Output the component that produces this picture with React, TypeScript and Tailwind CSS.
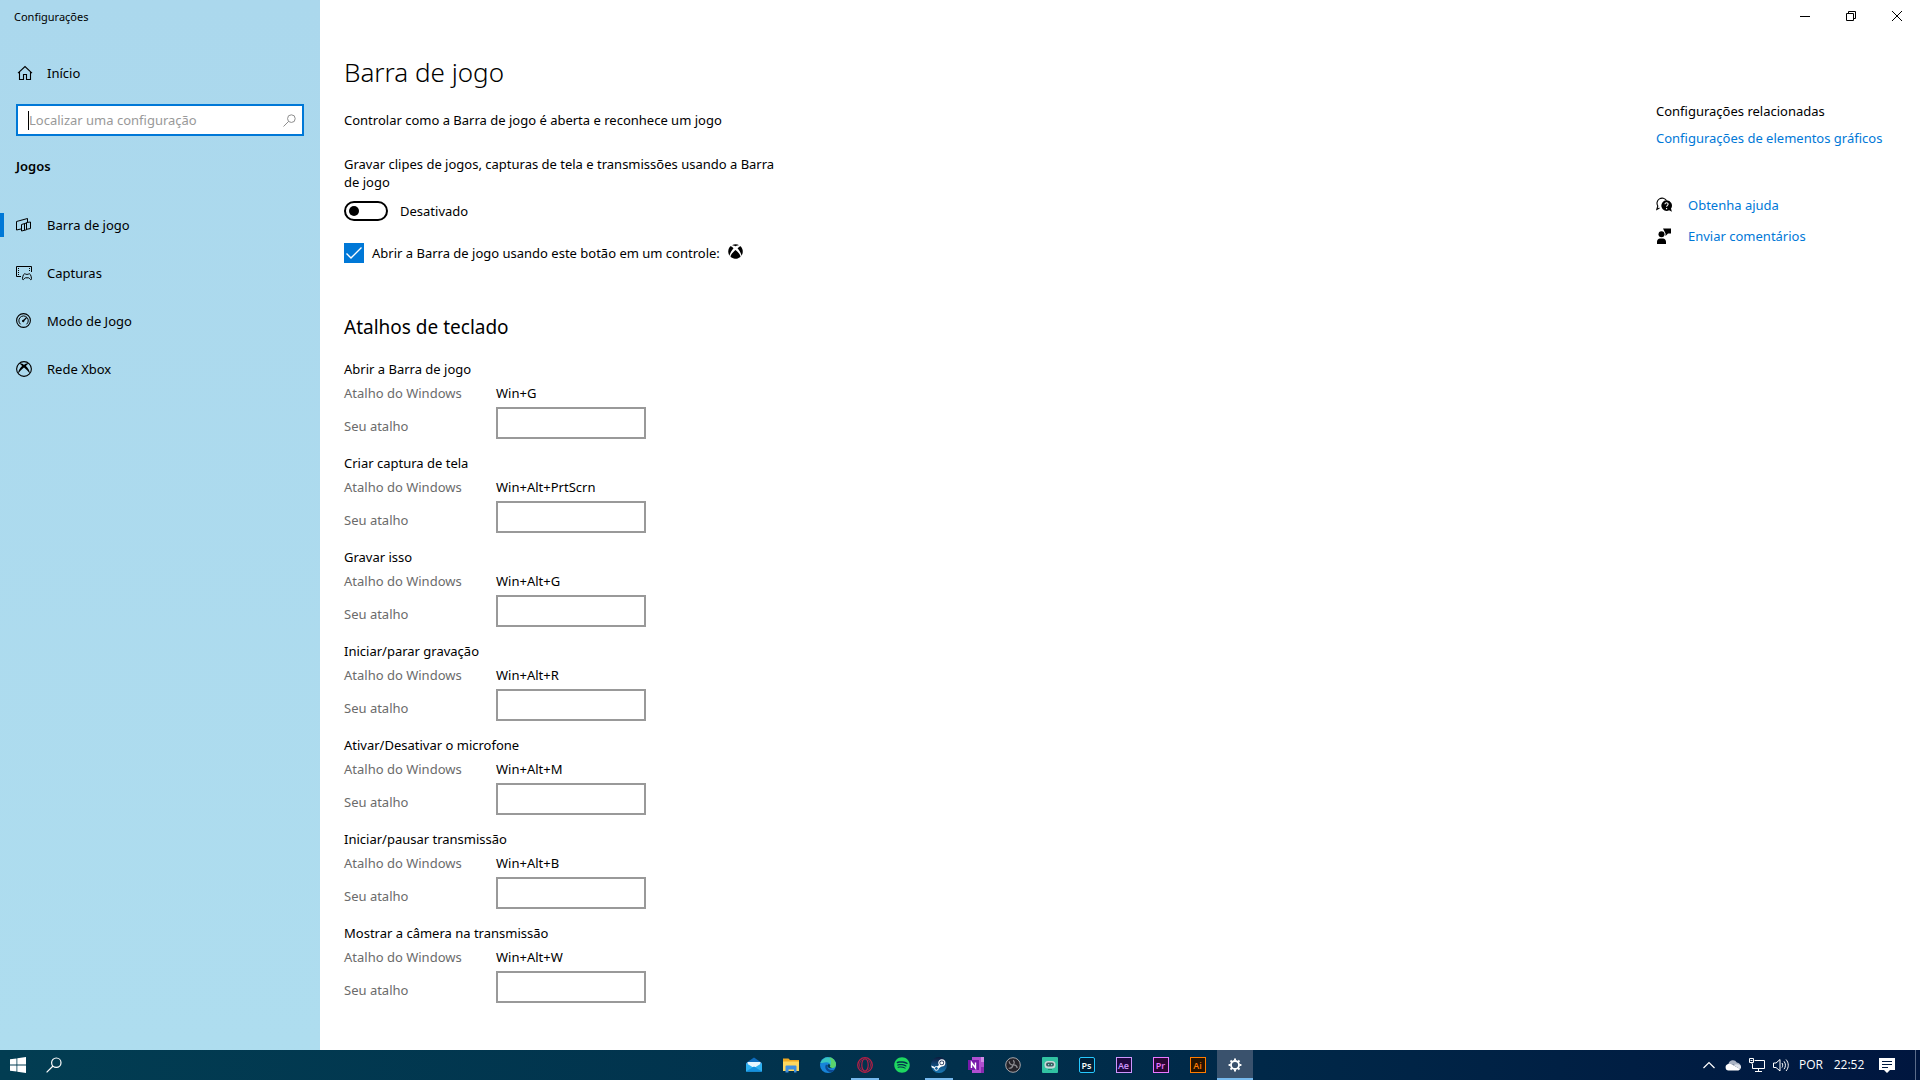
import React, { useState } from "react";
import { FaSpotify, FaXbox } from "react-icons/fa";

interface NavItem {
  label: string;
  icon: React.ReactNode;
}

interface Shortcut {
  id: string;
  title: string;
  keys: string;
}

interface TaskApp {
  name: string;
  icon: React.ReactNode;
  running?: boolean;
  active?: boolean;
}

const HomeIcon = () => (
  <svg width="16" height="16" viewBox="0 0 16 16" fill="none" stroke="black" strokeWidth="1.1">
    <path d="M1 8.2 8 1.5l7 6.7M2.5 7v7.5h4V9.500h3v5h4V7" />
  </svg>
);

const SearchIcon = ({ size, color }: { size: number; color: string }) => (
  <svg width={size} height={size} viewBox="0 0 16 16" fill="none" stroke={color} strokeWidth="1.2">
    <circle cx="10.300" cy="5.700" r="4.700" />
    <path d="M7 9 .6 15.400" />
  </svg>
);

const GameBarIcon = () => (
  <svg width="16" height="16" viewBox="0 0 16 16" fill="none" stroke="black">
    <path d="M5 12 .5 13V4.500L11.500 1.500V5" />
    <path d="M5.500 7.500v6.500l5-1.200V5.500l4-.5v6.500l-4 .8M5.500 7.500l5-1.500M8.500 7v6" />
  </svg>
);

const CapturesIcon = () => (
  <svg width="16" height="16" viewBox="0 0 16 16" fill="none" stroke="black">
    <path d="M5 11.500H.5v-10h15V7" />
    <path d="M2.500 3v8M13.500 3v4" strokeDasharray="1 1" />
    <path d="M6.700 14.500c-.6-1 .5-5.500 1.800-5.700.9-.1 1 .6 2.500.6s1.700-.7 2.500-.6c1.300.2 2.400 4.700 1.800 5.700-.8 1-1.900-1.700-2.700-1.700H9.400c-.8 0-1.900 2.700-2.700 1.700z" />
  </svg>
);

const GameModeIcon = () => (
  <svg width="16" height="16" viewBox="0 0 16 16" fill="none" stroke="black">
    <circle cx="7.500" cy="7.500" r="6.900" strokeWidth="1.1" />
    <path d="M4.600 11.300a4.700 4.700 0 1 1 5.900 0" />
    <path d="M7.200 8 10.600 4.500" strokeWidth="1.2" />
    <circle cx="7.200" cy="8" r=".8" fill="black" />
  </svg>
);

const XboxNetworkIcon = () => (
  <svg width="16" height="16" viewBox="0 0 16 16">
    <circle cx="8" cy="8" r="7.400" fill="none" stroke="black" strokeWidth="1.1" />
    <path d="M3.200 2.500C5 1.900 6.900 3 8 4c1.100-1 3-2.100 4.800-1.500-.9.300-2.200 1.700-2.900 2.600 2.300 2.100 4.200 5.400 3.900 7.600C12.500 10.500 9.800 7.700 8 6.400 6.200 7.700 3.500 10.500 2.200 12.700c-.3-2.200 1.600-5.500 3.900-7.600-.7-.9-2-2.300-2.900-2.600z" />
  </svg>
);

const HelpIcon = () => (
  <svg width="16" height="16" viewBox="0 0 16 16">
    <path d="M3.500 11 .8 12.500 1.800 9A5 5 0 1 1 10.500 3.500" fill="none" stroke="black" strokeWidth="1.1" />
    <path d="M10.500 3.300a5.300 5.300 0 1 0 2.600 10l2.800 1.500-.9-3.200a5.300 5.300 0 0 0-4.500-8.300z" />
    <path d="M9 7.200c0-2 3.200-1.900 3.100.1-.1 1.100-1.500 1.100-1.500 2.500M10.600 11v1.200" fill="none" stroke="white" strokeWidth="1.1" />
  </svg>
);

const FeedbackIcon = () => (
  <svg width="16" height="16" viewBox="0 0 16 16">
    <circle cx="5.500" cy="6.300" r="3" />
    <path d="M1 16v-2.200c0-2 1.300-3.300 3-3.300h3c1.700 0 3 1.300 3 3.300V16zM7 .5h8v5h-3L9.500 8V5.500z" />
  </svg>
);

const WindowsIcon = () => (
  <svg width="16" height="16" viewBox="0 0 16 16" fill="white">
    <path d="M0 2.300 6.500 1.400v6.200H0zM7.300 1.300 16 0v7.600H7.300zM0 8.400h6.500v6.200L0 13.700zM7.300 8.400H16V16l-8.700-1.300z" />
  </svg>
);

const MailIcon = () => (
  <svg width="16" height="16" viewBox="0 0 16 16">
    <path d="M0 6 8 .5 16 6v8.500H0z" fill="#0f6cbd" />
    <path d="M1.500 5h13v5h-13z" fill="#e8f6ff" />
    <path d="M0 6l8 5 8-5v8.500H0z" fill="#2fb1f0" />
    <path d="M0 14.500 8 9.500l8 5z" fill="#1490df" />
  </svg>
);

const FolderIcon = () => (
  <svg width="16" height="16" viewBox="0 0 16 16">
    <path d="M0 1.500h5.500L7 3h9v11H0z" fill="#f0a922" />
    <path d="M0 4.500h16V14H0z" fill="#ffd75e" />
    <path d="M3.500 8.500h9a1 1 0 0 1 1 1v6H11v-3H5.500v3H2.500v-6a1 1 0 0 1 1-1z" fill="#3f8fe0" />
  </svg>
);

const EdgeIcon = () => (
  <svg width="16" height="16" viewBox="0 0 16 16">
    <circle cx="8" cy="8" r="8" fill="#1784d8" />
    <path d="M.4 6A8 8 0 0 1 16 7.500c0 2.500-2 3.500-4 3.500-1.700 0-2.600-.7-2-1.500.9-1.500 0-4.300-3.600-4.300C3.400 5.200 1 6.500.4 6z" fill="#39c6c0" />
    <path d="M9 .1A8 8 0 0 1 16 7.500c0 2.500-2 3.500-4 3.500-1.700 0-2.600-.7-2-1.500C12 6 11 2 9 .1z" fill="#5bd36b" />
    <path d="M6 7.500c-2 3 .5 7.300 4.500 7.700 1.700 0 3.500-1.200 4.300-2.700-4 1.800-8.300-.7-7.300-4.300z" fill="#0c4a94" />
    <path d="M7.500 8.500c.3-1.600 2.500-1.400 2.700 0 0 .6-.5 1-.2 1.600.3.500 1 .8 2 .9-2 .8-4.700-.4-4.500-2.500z" fill="#023a50" />
  </svg>
);

const OperaIcon = () => (
  <svg width="16" height="16" viewBox="0 0 16 16" fill="none" stroke="#b51f47">
    <circle cx="8" cy="8" r="7.300" strokeWidth="1.3" />
    <ellipse cx="8" cy="8" rx="3.200" ry="6.200" strokeWidth="1.2" />
    <path d="M5.300 2.300C1.500 5 1.500 11 5.300 13.700M10.700 2.300c3.800 2.700 3.800 8.700 0 11.400" strokeWidth=".7" />
  </svg>
);

const SteamIcon = () => (
  <svg width="16" height="16" viewBox="0 0 16 16">
    <defs>
      <linearGradient id="steam" x1="0" y1="0" x2="0" y2="1">
        <stop offset="0" stopColor="#0c1a3c" />
        <stop offset="1" stopColor="#1a7bb8" />
      </linearGradient>
    </defs>
    <circle cx="8" cy="8" r="8" fill="url(#steam)" />
    <path d="M.2 8.500 5 10.500l3-2.500V5.500l3.500 3.300L8 11.300 6.500 13 .8 10.500z" fill="white" />
    <circle cx="10.800" cy="5.800" r="3" fill="#12264d" stroke="white" strokeWidth="1.2" />
    <circle cx="10.800" cy="5.800" r="1.600" fill="white" />
    <circle cx="5.400" cy="11.400" r="1.900" fill="#17619a" stroke="white" />
  </svg>
);

const OneNoteIcon = () => (
  <svg width="16" height="16" viewBox="0 0 16 16">
    <path d="M4 0h12v16H4z" fill="#b14fd0" />
    <path d="M13 0h3v5h-3z" fill="#d08ae6" />
    <path d="M13 10h3v6h-3z" fill="#8a2bb0" />
    <path d="M0 3h11v10H0z" fill="#7719aa" />
    <path d="M3.500 11V5.500l4 5.500V5.500" fill="none" stroke="white" strokeWidth="1.4" />
  </svg>
);

const ObsIcon = () => (
  <svg width="16" height="16" viewBox="0 0 16 16">
    <circle cx="8" cy="8" r="7.300" fill="#25232a" stroke="#a9a9ad" strokeWidth="1" />
    <path d="M4.200 4.200c0 2.300 1.500 3.600 3.800 3.800 1.500-1.500 1.500-3.300.3-4.800M8 8c-.5 2.300-2 3.500-4.300 3.200M8 8c2.200-.4 3.800.8 4.300 3" fill="none" stroke="#8d8d92" strokeWidth="1.2" />
  </svg>
);

const StreamlabsIcon = () => (
  <svg width="16" height="16" viewBox="0 0 16 16">
    <rect width="16" height="16" rx="1" fill="#31c3a2" />
    <rect x="2.500" y="4" width="11" height="7.500" rx="3.500" fill="#c9d6d6" />
    <rect x="4" y="5.500" width="8" height="4" rx="2" fill="#3c5960" />
    <path d="M6 7h1.200v1.200H6zM9 7h1.200v1.200H9z" fill="#7df0d4" />
    <path d="M6 12h4v1H6z" fill="#1a8f78" />
  </svg>
);

const GearIcon = () => (
  <svg width="14" height="14" viewBox="0 0 14 14" fill="none" stroke="white">
    <circle cx="7" cy="7" r="4" strokeWidth="1.800" />
    <path d="M7 .6v2M7 11.400v2M.6 7h2M11.400 7h2M2.500 2.500l1.400 1.400M10.100 10.100l1.400 1.400M11.500 2.500l-1.400 1.400M3.900 10.100l-1.400 1.400" strokeWidth="2" />
  </svg>
);

const adobe = "flex h-4 w-4 items-center justify-center border text-[9px] font-semibold leading-none";

const navItems: NavItem[] = [
  { label: "Barra de jogo", icon: <GameBarIcon /> },
  { label: "Capturas", icon: <CapturesIcon /> },
  { label: "Modo de Jogo", icon: <GameModeIcon /> },
  { label: "Rede Xbox", icon: <XboxNetworkIcon /> },
];

const shortcuts: Shortcut[] = [
  { id: "open", title: "Abrir a Barra de jogo", keys: "Win+G" },
  { id: "screenshot", title: "Criar captura de tela", keys: "Win+Alt+PrtScrn" },
  { id: "record-that", title: "Gravar isso", keys: "Win+Alt+G" },
  { id: "record", title: "Iniciar/parar gravação", keys: "Win+Alt+R" },
  { id: "mic", title: "Ativar/Desativar o microfone", keys: "Win+Alt+M" },
  { id: "broadcast", title: "Iniciar/pausar transmissão", keys: "Win+Alt+B" },
  { id: "camera", title: "Mostrar a câmera na transmissão", keys: "Win+Alt+W" },
];

const apps: TaskApp[] = [
  { name: "Email", icon: <MailIcon /> },
  { name: "Explorador de Arquivos", icon: <FolderIcon /> },
  { name: "Microsoft Edge", icon: <EdgeIcon /> },
  { name: "Opera", icon: <OperaIcon />, running: true },
  { name: "Spotify", icon: <FaSpotify size={16} color="#1ed760" /> },
  { name: "Steam", icon: <SteamIcon />, running: true },
  { name: "OneNote", icon: <OneNoteIcon /> },
  { name: "OBS Studio", icon: <ObsIcon /> },
  { name: "Streamlabs", icon: <StreamlabsIcon /> },
  { name: "Photoshop", icon: <span className={`${adobe} rounded-xs border-[#26c9ff] bg-[#001e36] text-white`}>Ps</span> },
  { name: "After Effects", icon: <span className={`${adobe} border-[#cf96fd] bg-[#1f0740] text-[#cf96fd]`}>Ae</span> },
  { name: "Premiere Pro", icon: <span className={`${adobe} border-[#ea77ff] bg-[#2a0634] text-[#ea77ff]`}>Pr</span> },
  { name: "Illustrator", icon: <span className={`${adobe} border-[#ff7c00] bg-[#261300] text-[#ff7c00]`}>Ai</span> },
  { name: "Configurações", icon: <GearIcon />, running: true, active: true },
];

const Sidebar = () => {
  const [current, setCurrent] = useState("Barra de jogo");

  return (
    <aside className="w-80 shrink-0 bg-linear-to-b from-[#abd8ed] to-[#aeddef]">
      <div className="flex h-8 items-center pl-[14px] pt-0.5 text-[11px]">Configurações</div>
      <a href="#inicio" className="mt-[21px] flex h-10 items-center gap-3.5 pl-[17px]">
        <HomeIcon />
        Início
      </a>
      <div className="mx-4 mt-[11px] flex h-8 items-center border-2 border-[#0078d7] bg-white pl-2.5 pr-1.5">
        <span className="h-[19px] w-px bg-black" />
        <input
          type="text"
          aria-label="Localizar uma configuração"
          placeholder="Localizar uma configuração"
          className="min-w-0 flex-1 bg-transparent outline-none placeholder:text-[#999999]"
        />
        <SearchIcon size={13} color="#8a8a8a" />
      </div>
      <h2 className="ml-4 mt-5 font-semibold leading-5">Jogos</h2>
      <nav className="mt-[25px]">
        {navItems.map((item) => (
          <a
            key={item.label}
            href="#jogos"
            onClick={() => setCurrent(item.label)}
            className="flex h-12 items-center"
          >
            <span className={`h-6 w-1 ${current === item.label ? "bg-[#0078d7]" : ""}`} />
            <span className="ml-3 mr-[15px]">{item.icon}</span>
            {item.label}
          </a>
        ))}
      </nav>
    </aside>
  );
};

const WindowControls = () => (
  <div className="flex h-8 justify-end">
    <button aria-label="Minimizar" className="flex w-[46px] items-center justify-center">
      <svg width="10" height="10" viewBox="0 0 10 10" stroke="black">
        <path d="M0 5.500h10" />
      </svg>
    </button>
    <button aria-label="Restaurar" className="flex w-[46px] items-center justify-center">
      <svg width="10" height="10" viewBox="0 0 10 10" fill="none" stroke="black">
        <path d="M.5 2.500h7v7h-7zM2.500 2.500v-2h7v7h-2" />
      </svg>
    </button>
    <button aria-label="Fechar" className="flex w-[46px] items-center justify-center">
      <svg width="10" height="10" viewBox="0 0 10 10" stroke="black">
        <path d="M0 0l10 10M10 0 0 10" />
      </svg>
    </button>
  </div>
);

const ShortcutRow = ({ shortcut }: { shortcut: Shortcut }) => (
  <div className="mb-[15px]">
    <h3>{shortcut.title}</h3>
    <div className="mt-1.5 flex text-[#6b6b6b]">
      <span className="w-[152px]">Atalho do Windows</span>
      <span className="text-black">{shortcut.keys}</span>
    </div>
    <div className="mt-[5px] flex items-center">
      <label htmlFor={shortcut.id} className="w-[152px] pt-1.5 text-[#6b6b6b]">
        Seu atalho
      </label>
      <input id={shortcut.id} type="text" className="h-8 w-[150px] border-2 border-[#999999] bg-white px-2 outline-none" />
    </div>
  </div>
);

const Taskbar = () => (
  <footer className="flex h-[30px] bg-linear-to-r from-[#023d52] via-[#01304c] to-[#00163f] font-['Open_Sans','Noto_Sans',sans-serif] text-xs text-white">
    <div className="flex flex-1">
      <button aria-label="Iniciar" className="flex w-9 items-center justify-center">
        <WindowsIcon />
      </button>
      <button aria-label="Pesquisar" className="flex w-9 items-center justify-center">
        <SearchIcon size={16} color="white" />
      </button>
    </div>
    <div className="flex gap-px pl-[68px]">
      {apps.map((app) => (
        <button
          key={app.name}
          aria-label={app.name}
          className={`flex w-9 flex-col items-center ${app.active ? "bg-[#3a526d]" : ""}`}
        >
          <span className="flex h-7 items-center pt-0.5">{app.icon}</span>
          {app.running && <span className={`h-0.5 bg-[#76b9ed] ${app.active ? "w-9" : "w-7"}`} />}
        </button>
      ))}
    </div>
    <div className="flex flex-1 items-center justify-end">
      <button aria-label="Mostrar ícones ocultos" className="flex w-6 justify-center">
        <svg width="12" height="12" viewBox="0 0 12 12" fill="none" stroke="white" strokeWidth="1.2">
          <path d="M.5 9 6 3.500 11.500 9" />
        </svg>
      </button>
      <button aria-label="OneDrive" className="flex w-6 justify-center">
        <svg width="16" height="16" viewBox="0 0 16 16">
          <path d="M3.500 7a4.500 4.500 0 0 1 8.300-1.500c2.500.2 4.200 2.200 4.200 4.300L10 8z" fill="#a9b3c4" />
          <path d="M3.500 13.500a3.300 3.300 0 0 1-.3-6.500c2-.7 4 .2 5.300 1.300l6.700 3.700c-.5.900-1.300 1.500-2.700 1.500z" fill="white" />
          <path d="M8.500 8.200c2-1.400 6.500-1.300 7.500 1.300.1 1-.2 2-.8 2.700z" fill="#dde2ea" />
        </svg>
      </button>
      <button aria-label="Rede" className="flex w-6 justify-center">
        <svg width="16" height="16" viewBox="0 0 16 16" fill="none" stroke="white">
          <path d="M5.500 3.500h10v8H3.500V6.500M9.500 11.500v3M6 14.500h7M.5 1.500h4v4h-4zM2.500 5.500v1M1.500 3.500h2" />
        </svg>
      </button>
      <button aria-label="Volume" className="flex w-6 justify-center">
        <svg width="16" height="16" viewBox="0 0 16 16" fill="none" stroke="white">
          <path d="M.5 6v4.500H3l4 3.500V2.500L3 6zM9 6c.9 1.400.9 3.100 0 4.500M11 4.300c1.900 2.400 1.900 5.500 0 7.900M13 2.500c3 3.400 3 8.100 0 11.500" />
        </svg>
      </button>
      <button className="w-9">POR</button>
      <button className="w-10">22:52</button>
      <button aria-label="Notificações" className="flex w-9 justify-center">
        <svg width="16" height="16" viewBox="0 0 16 16">
          <path d="M0 1h16v12h-5l-3 3-3-3H0z" fill="white" />
          <path d="M3 4.500h10M3 7.500h10M3 10.500h6" stroke="#001a40" />
        </svg>
      </button>
      <button aria-label="Mostrar área de trabalho" className="ml-2.5 h-full w-[5px] border-l border-[#5b6c8a]" />
    </div>
  </footer>
);

const App: React.FC = () => {
  const [recording, setRecording] = useState(false);
  const [openWithController, setOpenWithController] = useState(true);

  return (
    <div className="flex min-h-screen flex-col bg-white font-['Noto_Sans','Open_Sans',sans-serif] text-[13px] leading-[18px] text-black">
      <div className="flex flex-1">
        <Sidebar />
        <main className="flex flex-1 flex-col">
          <WindowControls />
          <div className="flex flex-1 justify-between pl-6">
            <div className="w-[440px] pt-[22px]">
              <h1 className="text-[26px] font-light leading-9">Barra de jogo</h1>
              <p className="mt-[21px]">Controlar como a Barra de jogo é aberta e reconhece um jogo</p>

              <p id="record-label" className="mt-[26px]">
                Gravar clipes de jogos, capturas de tela e transmissões usando a Barra de jogo
              </p>
              <div className="mt-2.5 flex items-center gap-3">
                <button
                  role="switch"
                  aria-checked={recording}
                  aria-labelledby="record-label"
                  onClick={() => setRecording(!recording)}
                  className={`flex h-5 w-11 items-center rounded-full border-2 px-[3px] ${
                    recording ? "justify-end border-[#0078d7] bg-[#0078d7]" : "border-black"
                  }`}
                >
                  <span className={`h-2.5 w-2.5 rounded-full ${recording ? "bg-white" : "bg-black"}`} />
                </button>
                <span>{recording ? "Ativado" : "Desativado"}</span>
              </div>

              <div className="mt-[22px] flex items-center gap-2">
                <div className="relative h-5 w-5">
                  <input
                    id="controller"
                    type="checkbox"
                    checked={openWithController}
                    onChange={(e) => setOpenWithController(e.target.checked)}
                    className="block h-5 w-5 appearance-none border-2 border-[#666666] checked:border-[#0078d7] checked:bg-[#0078d7]"
                  />
                  <svg className="pointer-events-none absolute inset-0" width="20" height="20" viewBox="0 0 20 20" fill="none" stroke="white" strokeWidth="1.4">
                    <path d="M2.500 10.500 7 15 17.500 4.500" />
                  </svg>
                </div>
                <label htmlFor="controller" className="flex items-start gap-2 whitespace-nowrap">
                  Abrir a Barra de jogo usando este botão em um controle:
                  <FaXbox size={15} />
                </label>
              </div>

              <h2 className="mb-[19px] mt-[50px] text-[19px] leading-7">Atalhos de teclado</h2>
              {shortcuts.map((s) => (
                <ShortcutRow key={s.id} shortcut={s} />
              ))}
            </div>

            <div className="w-[264px] pt-[70px]">
              <h2>Configurações relacionadas</h2>
              <a href="#graficos" className="mt-[9px] block whitespace-nowrap text-[#0078d7]">
                Configurações de elementos gráficos
              </a>
              <a href="#ajuda" className="mt-[49px] flex items-center gap-4 text-[#0078d7]">
                <HelpIcon />
                Obtenha ajuda
              </a>
              <a href="#comentarios" className="mt-[13px] flex items-center gap-4 text-[#0078d7]">
                <FeedbackIcon />
                Enviar comentários
              </a>
            </div>
          </div>
        </main>
      </div>
      <Taskbar />
    </div>
  );
};

export default App;
